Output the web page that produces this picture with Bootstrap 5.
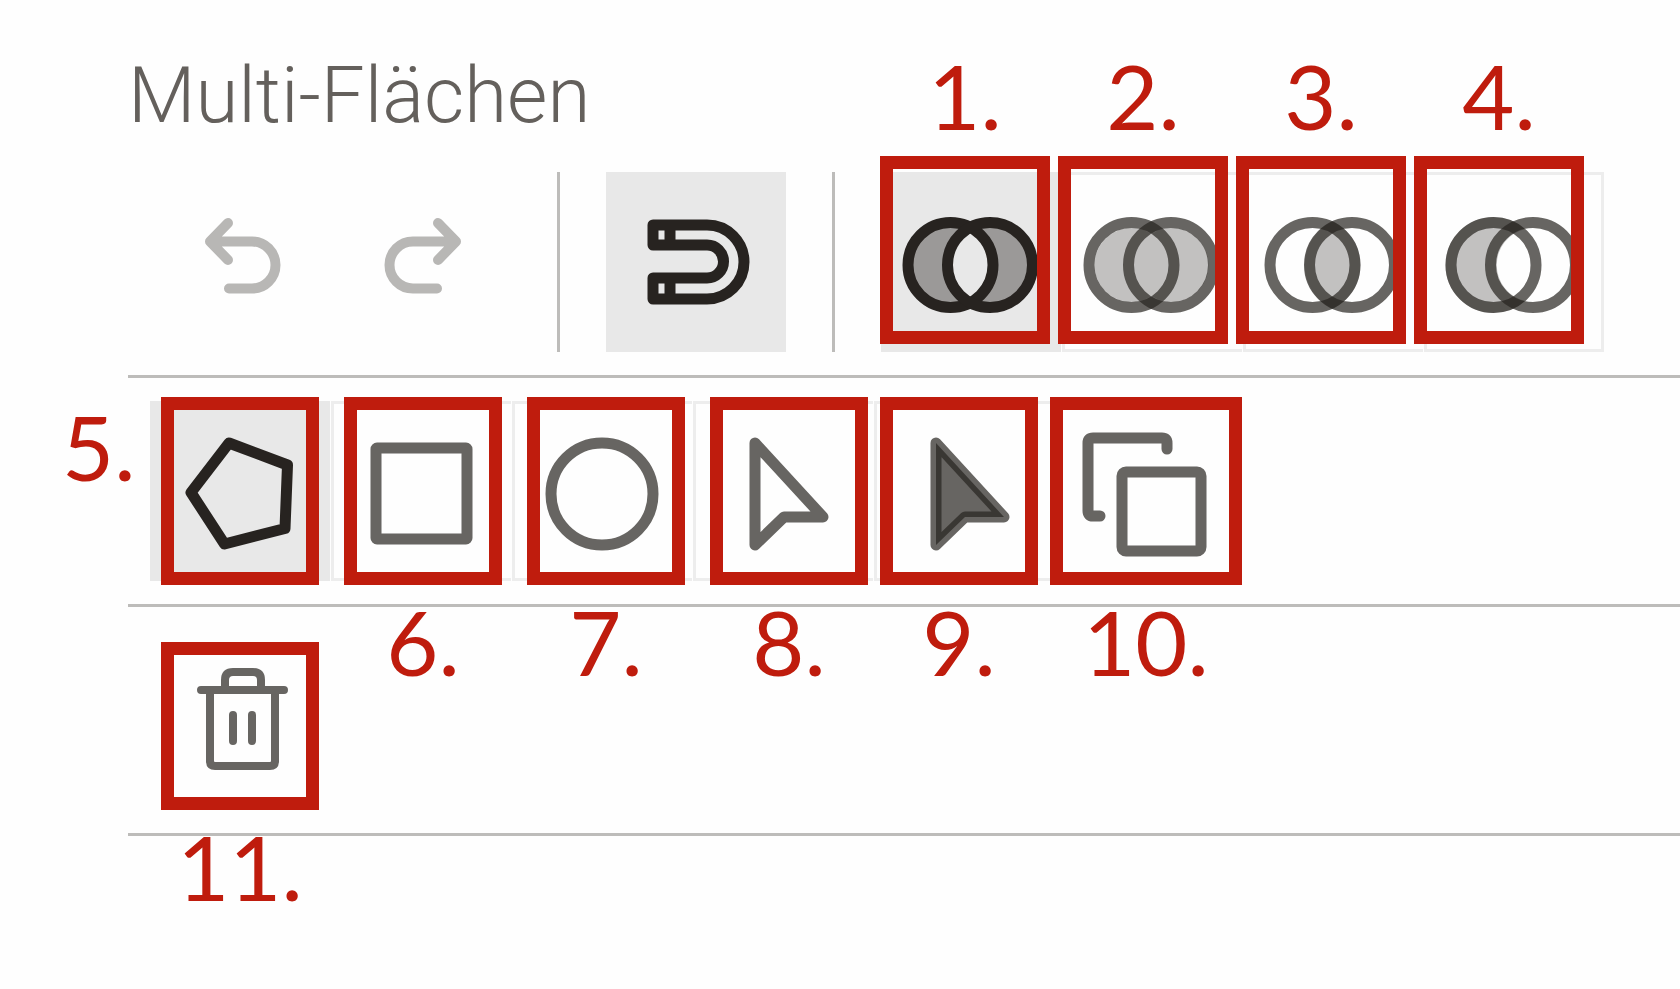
<!DOCTYPE html>
<html lang="de">
<head>
<meta charset="utf-8">
<meta name="viewport" content="width=device-width, initial-scale=1">
<title>Multi-Flächen</title>
<link href="https://cdn.jsdelivr.net/npm/bootstrap@5.3.0/dist/css/bootstrap.min.css" rel="stylesheet">
<style>
  :root { --ink: #272320; --line: #bdbcba; --tile: #e8e8e8; --red: #bf1c0d; }
  body { background: #fefefe; color: #64605c; font-family: Roboto, "Open Sans", sans-serif; }
  .panel { padding-left: 128px; }
  .panel-title { font-size: 78px; font-weight: 300; line-height: 90px; padding: 51px 0 8px; }
  .toolbar { padding: 23px 0 23px 22px; border-bottom: 3px solid var(--line); }
  .tools { gap: 1px; }
  .tool { width: 180px; height: 180px; flex: none; padding: 0; border: 0; border-radius: 0; background: transparent; color: var(--ink); }
  .tool svg { display: block; width: 180px; height: 180px; fill: none; stroke: currentColor; stroke-width: 11; stroke-linecap: round; stroke-linejoin: round; }
  .tool.framed { border: solid #ededed; border-width: 3px 0 3px 3px; }
  .tool.framed svg { margin: -3px; }
  .tool.framed.last { border-right-width: 3px; }
  .tool.active, .tool.active:hover { background: var(--tile); color: var(--ink); }
  .tool:disabled { border: 0; opacity: 1; color: #b8b7b5; }
  .tool:disabled svg { stroke-width: 10; }
  .soft { stroke-opacity: .7; }
  .shade { fill: var(--ink); fill-opacity: .28; stroke: none; }
  .shade-strong { fill-opacity: .4; }
  .divider { width: 3px; height: 180px; margin: 0 46px; background: var(--line); flex: none; }
  .notes { position: absolute; z-index: 2; pointer-events: none; color: var(--red); font-family: Lato, sans-serif; font-size: 90px; line-height: 90px; }
  .notes-ops { left: 752px; bottom: 31px; gap: 8px; }
  .notes-shapes { left: 33px; top: 19px; gap: 12px; }
  .notes-delete { left: 33px; top: 35px; }
  .notes-side { left: -66px; top: 23px; }
  .wide-gap { gap: 25px; }
  .note { display: flex; flex-direction: column; align-items: center; gap: 11px; width: 158px; }
  .note-op { width: 170px; gap: 16px; }
  .note-copy { width: 192px; }
  .frame { width: 100%; height: 188px; border: 13px solid var(--red); }
  .frame-delete { height: 168px; }
</style>
</head>
<body>
<main class="panel min-vh-100">
  <h1 class="panel-title m-0">Multi-Flächen</h1>

  <section class="toolbar position-relative d-flex" aria-label="Bearbeiten">
    <div class="tools d-flex">
      <button class="btn tool" type="button" disabled aria-label="Rückgängig">
        <svg viewBox="0 0 180 180"><path d="M78 51 60 69.500 78 88M60 69.500H102a23.500 23.500 0 0 1 0 47H79"/></svg>
      </button>
      <button class="btn tool" type="button" disabled aria-label="Wiederholen">
        <svg viewBox="0 0 180 180"><path d="M107 51 125 69.500 107 88M125 69.500H82a23.500 23.500 0 0 0 0 47H106"/></svg>
      </button>
    </div>
    <div class="divider"></div>
    <button class="btn tool active" type="button" aria-label="Einrasten">
      <svg viewBox="0 0 180 180"><path d="M47 53H101a37 37 0 0 1 0 74H47V106H101a16.500 16.500 0 0 0 0-33H47ZM64 53V73M64 106V127"/></svg>
    </button>
    <div class="divider"></div>
    <div class="tools d-flex" role="group" aria-label="Flächen kombinieren">
      <button class="btn tool active" type="button" aria-label="Ausschließen">
        <svg viewBox="0 0 180 180"><path class="shade shade-strong" fill-rule="evenodd" d="M27 93a42.500 42.500 0 1 1 85 0a42.500 42.500 0 1 1-85 0ZM67 93a42.500 42.500 0 1 1 85 0a42.500 42.500 0 1 1-85 0Z"/><circle cx="69.500" cy="93" r="42.500"/><circle cx="109" cy="93" r="42.500"/></svg>
      </button>
      <button class="btn tool framed" type="button" aria-label="Vereinen">
        <svg viewBox="0 0 180 180"><path class="shade" d="M89.500 61.900A37 37 0 1 0 89.500 124.100A37 37 0 1 0 89.500 61.900Z"/><g class="soft"><circle cx="69.500" cy="93" r="42.500"/><circle cx="109" cy="93" r="42.500"/></g></svg>
      </button>
      <button class="btn tool framed" type="button" aria-label="Schnittmenge">
        <svg viewBox="0 0 180 180"><path class="shade" d="M89.500 49.400A48 48 0 0 1 89.500 136.600A48 48 0 0 1 89.500 49.400Z"/><g class="soft"><circle cx="69.500" cy="93" r="42.500"/><circle cx="109" cy="93" r="42.500"/></g></svg>
      </button>
      <button class="btn tool framed last" type="button" aria-label="Abziehen">
        <svg viewBox="0 0 180 180"><path class="shade" d="M101.200 57A48 48 0 1 0 101.200 129A37 37 0 0 1 101.200 57Z"/><g class="soft"><circle cx="69.500" cy="93" r="42.500"/><circle cx="109" cy="93" r="42.500"/></g></svg>
      </button>
    </div>
    <div class="notes notes-ops d-flex">
      <div class="note note-op"><span>1.</span><div class="frame"></div></div>
      <div class="note note-op"><span>2.</span><div class="frame"></div></div>
      <div class="note note-op"><span>3.</span><div class="frame"></div></div>
      <div class="note note-op"><span>4.</span><div class="frame"></div></div>
    </div>
  </section>

  <section class="toolbar position-relative" aria-label="Formen">
    <div class="tools d-flex" role="group">
      <button class="btn tool active" type="button" aria-label="Polygon">
        <svg viewBox="0 0 180 180"><path d="M79 42 137.500 64 135 127.500 74.500 143 41 91.500Z"/></svg>
      </button>
      <button class="btn tool framed" type="button" aria-label="Rechteck">
        <svg viewBox="0 0 180 180"><rect class="soft" x="45" y="47" width="91" height="91" rx="1"/></svg>
      </button>
      <button class="btn tool framed" type="button" aria-label="Kreis">
        <svg viewBox="0 0 180 180"><circle class="soft" cx="90" cy="93" r="51"/></svg>
      </button>
      <button class="btn tool framed" type="button" aria-label="Auswahl">
        <svg viewBox="0 0 180 180"><path class="soft" d="M62 42 130 116H91L62 144Z"/></svg>
      </button>
      <button class="btn tool framed" type="button" aria-label="Direktauswahl">
        <svg viewBox="0 0 180 180"><path class="soft" fill="currentColor" fill-opacity=".7" d="M62 42 130 116H91L62 144Z"/></svg>
      </button>
      <button class="btn tool" type="button" aria-label="Duplizieren">
        <svg viewBox="0 0 180 180"><g class="soft"><path d="M112 48V42q0-5-5-5H38q-5 0-5 5V110q0 5 5 5H45"/><rect x="67" y="71" width="79" height="79" rx="4"/></g></svg>
      </button>
    </div>
    <div class="notes notes-side">5.</div>
    <div class="notes notes-shapes d-flex">
      <div class="wide-gap d-flex">
        <div class="note"><div class="frame"></div></div>
        <div class="note"><div class="frame"></div><span>6.</span></div>
        <div class="note"><div class="frame"></div><span>7.</span></div>
        <div class="note"><div class="frame"></div><span>8.</span></div>
      </div>
      <div class="note"><div class="frame"></div><span>9.</span></div>
      <div class="note note-copy"><div class="frame"></div><span>10.</span></div>
    </div>
  </section>

  <section class="toolbar position-relative" aria-label="Entfernen">
    <button class="btn tool" type="button" aria-label="Löschen">
      <svg viewBox="0 0 180 180"><path class="soft" style="stroke-width:8" d="M51 60H134M60 60V131q0 5 5 5H120q5 0 5-5V60M75 60V50q0-8 8-8H103q8 0 8 8V60M83 85V111M102 85V111"/></svg>
    </button>
    <div class="notes notes-delete">
      <div class="note"><div class="frame frame-delete"></div><span>11.</span></div>
    </div>
  </section>
</main>
<script src="https://cdn.jsdelivr.net/npm/bootstrap@5.3.0/dist/js/bootstrap.bundle.min.js"></script>
</body>
</html>
